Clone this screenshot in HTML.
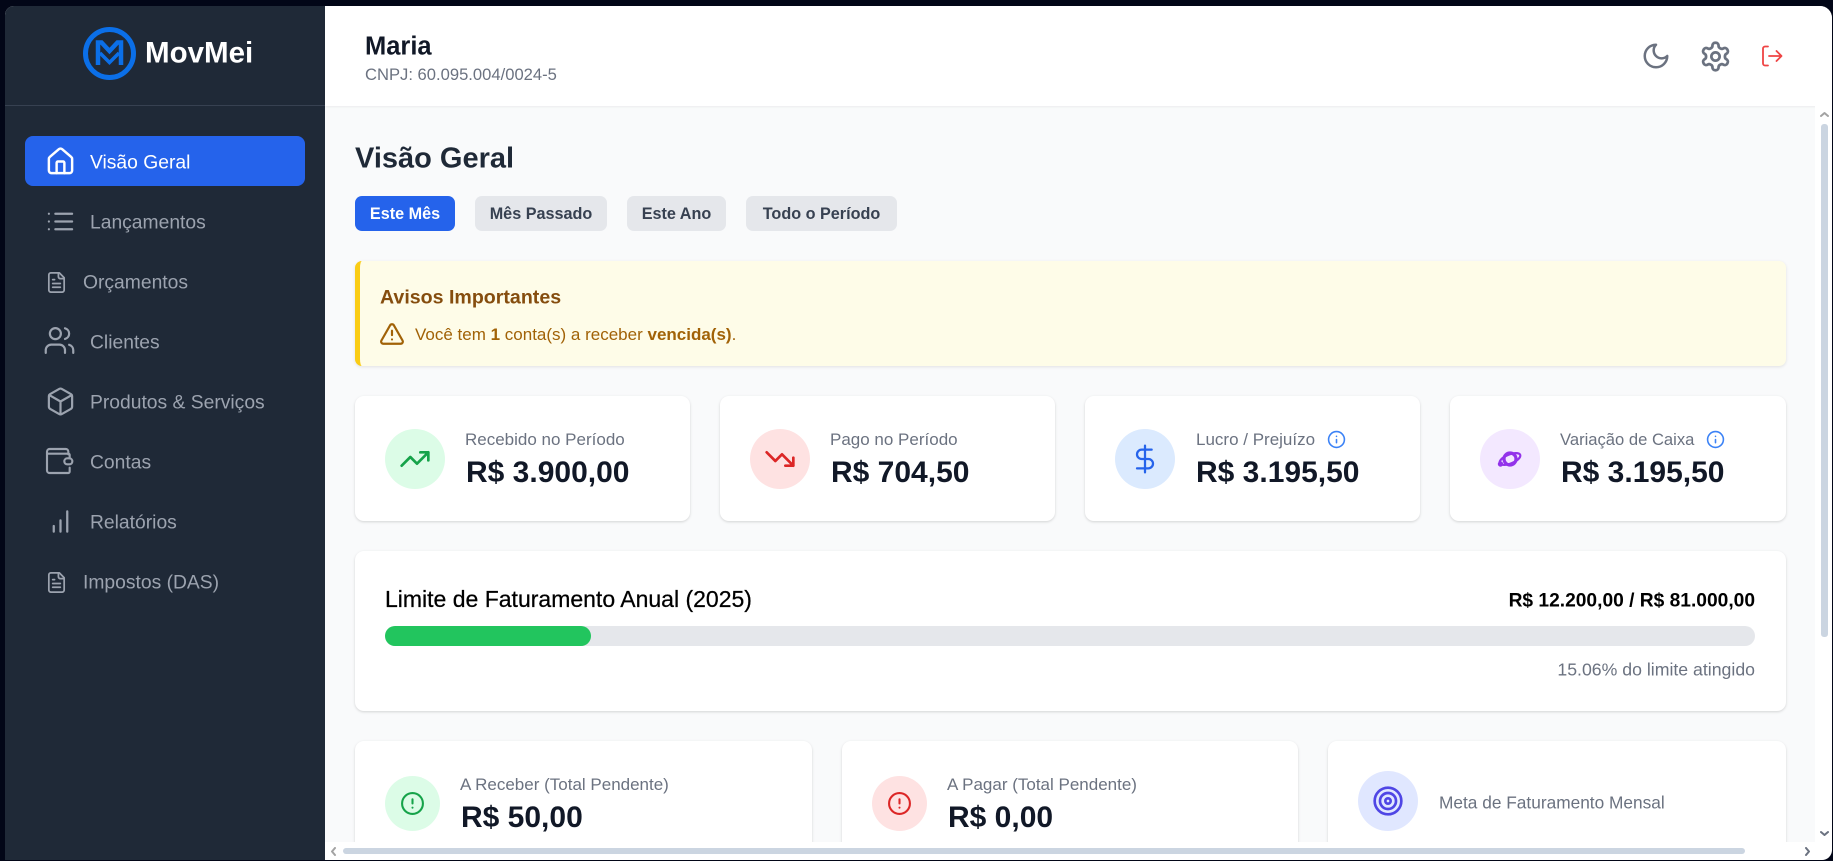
<!DOCTYPE html>
<html lang="pt-BR"><head><meta charset="utf-8"><title>MovMei</title>
<style>
*{box-sizing:border-box;margin:0;padding:0}
html,body{width:1833px;height:861px;overflow:hidden;background:#020617;font-family:"Liberation Sans",sans-serif}
.a,.t,svg.i{position:absolute}
.t{white-space:nowrap;line-height:1.2;transform:translateY(-50%)}
svg.i{fill:none;stroke:currentColor;stroke-linecap:round;stroke-linejoin:round;stroke-width:2}
.nav{color:#9ca3af;font-size:19.3px}
.card{position:absolute;background:#fff;border-radius:9px;box-shadow:0 1px 3px rgba(0,0,0,.1),0 1px 2px rgba(0,0,0,.06)}
.c{position:absolute;border-radius:50%}
.lb{color:#6b7280;font-size:17px}
.v{color:#111827;font-size:30px;font-weight:700}
.b{position:absolute;top:196px;height:35px;border-radius:7px;background:#e5e7eb;color:#374151;font-size:16.2px;font-weight:700;text-align:center;line-height:37px}
</style></head><body>
<div class="a" style="left:5px;top:6px;width:1827px;height:854px;border-radius:9px 12px 12px 0;overflow:hidden;background:#f9fafb">
<div class="a" style="left:0;top:0;width:320px;height:854px;background:#1f2937"></div>
<div class="a" style="left:0;top:99px;width:320px;height:1px;background:#374151"></div>
<div class="a" style="left:320px;top:0;width:1507px;height:100px;background:#fff;box-shadow:0 1px 2px rgba(0,0,0,.06)"></div>
</div>

<!-- logo -->
<svg class="i" style="left:83px;top:27px;color:#0b6fe8;stroke-linecap:butt;stroke-linejoin:miter" width="53" height="53" viewBox="0 0 53 53">
<circle cx="26.5" cy="26.5" r="24" stroke-width="5"/>
<path d="M15 38V15.5h3.5L26.5 24l8-8.5H38V38" stroke-width="4.5"/>
<path d="M17 26l9.5 9.5L36 26" stroke-width="3.5"/>
</svg>
<div class="t" style="left:145px;top:53px;color:#fff;font-size:29.5px;font-weight:700">MovMei</div>

<!-- nav -->
<div class="a" style="left:25px;top:136px;width:280px;height:50px;border-radius:8px;background:#2563eb"></div>
<svg class="i" style="left:44.5px;top:145.5px;color:#fff;stroke-width:1.9" width="31" height="31" viewBox="0 0 24 24"><path d="M15 21v-8a1 1 0 0 0-1-1h-4a1 1 0 0 0-1 1v8"/><path d="M3 10a2 2 0 0 1 .709-1.528l7-5.999a2 2 0 0 1 2.582 0l7 5.999A2 2 0 0 1 21 10v9a2 2 0 0 1-2 2H5a2 2 0 0 1-2-2z"/></svg>
<div class="t nav" style="left:90px;top:163px;color:#fff">Visão Geral</div>

<svg class="i" style="left:44.5px;top:205.5px;color:#9ca3af;stroke-width:1.7" width="31" height="31" viewBox="0 0 24 24"><path d="M3 12h.01M3 18h.01M3 6h.01M8 12h13M8 18h13M8 6h13"/></svg>
<div class="t nav" style="left:90px;top:223px">Lançamentos</div>

<svg class="i" style="left:45px;top:270.5px;color:#9ca3af;stroke-width:1.8" width="23" height="23" viewBox="0 0 24 24"><path d="M15 2H6a2 2 0 0 0-2 2v16a2 2 0 0 0 2 2h12a2 2 0 0 0 2-2V7Z"/><path d="M14 2v4a2 2 0 0 0 2 2h4M10 9H8M16 13H8M16 17H8"/></svg>
<div class="t nav" style="left:83px;top:283px">Orçamentos</div>

<svg class="i" style="left:43px;top:324px;color:#9ca3af;stroke-width:1.6" width="33" height="33" viewBox="0 0 24 24"><path d="M16 21v-2a4 4 0 0 0-4-4H6a4 4 0 0 0-4 4v2"/><circle cx="9" cy="7" r="4"/><path d="M22 21v-2a4 4 0 0 0-3-3.87M16 3.13a4 4 0 0 1 0 7.75"/></svg>
<div class="t nav" style="left:90px;top:343px">Clientes</div>

<svg class="i" style="left:44.5px;top:385.5px;color:#9ca3af;stroke-width:1.7" width="31" height="31" viewBox="0 0 24 24"><path d="M21 8a2 2 0 0 0-1-1.73l-7-4a2 2 0 0 0-2 0l-7 4A2 2 0 0 0 3 8v8a2 2 0 0 0 1 1.73l7 4a2 2 0 0 0 2 0l7-4A2 2 0 0 0 21 16Z"/><path d="m3.3 7 8.7 5 8.7-5M12 22V12"/></svg>
<div class="t nav" style="left:90px;top:403px">Produtos &amp; Serviços</div>

<svg class="i" style="left:43px;top:444.5px;color:#9ca3af;stroke-width:1.6" width="32" height="32" viewBox="0 0 24 24"><path d="M19 7V5a2 2 0 0 0-2-2H5a2 2 0 0 0-2 2v14a2 2 0 0 0 2 2h14a1 1 0 0 0 1-1v-3"/><path d="M3 6.5h16a1 1 0 0 1 1 1V10"/><rect x="16" y="10" width="6" height="4.5" rx="2.2"/></svg>
<div class="t nav" style="left:90px;top:463px">Contas</div>

<svg class="i" style="left:46.5px;top:507.5px;color:#9ca3af" width="27" height="27" viewBox="0 0 24 24"><path d="M12 21V11M18 21V3M6 21v-5"/></svg>
<div class="t nav" style="left:90px;top:523px">Relatórios</div>

<svg class="i" style="left:45px;top:570.5px;color:#9ca3af;stroke-width:1.8" width="23" height="23" viewBox="0 0 24 24"><path d="M15 2H6a2 2 0 0 0-2 2v16a2 2 0 0 0 2 2h12a2 2 0 0 0 2-2V7Z"/><path d="M14 2v4a2 2 0 0 0 2 2h4M10 9H8M16 13H8M16 17H8"/></svg>
<div class="t nav" style="left:83px;top:583px">Impostos (DAS)</div>

<!-- header -->
<div class="t" style="left:365px;top:47px;color:#111827;font-size:25.5px;font-weight:700">Maria</div>
<div class="t" style="left:365px;top:75px;color:#6b7280;font-size:16.6px">CNPJ: 60.095.004/0024-5</div>
<svg class="i" style="left:1641px;top:40.5px;color:#6b7280" width="30" height="30" viewBox="0 0 24 24"><path d="M12 3a6 6 0 0 0 9 9 9 9 0 1 1-9-9Z"/></svg>
<svg class="i" style="left:1699px;top:39.5px;color:#6b7280" width="33" height="33" viewBox="0 0 24 24"><path d="M12.22 2h-.44a2 2 0 0 0-2 2v.18a2 2 0 0 1-1 1.73l-.43.25a2 2 0 0 1-2 0l-.15-.08a2 2 0 0 0-2.73.73l-.22.38a2 2 0 0 0 .73 2.73l.15.1a2 2 0 0 1 1 1.72v.51a2 2 0 0 1-1 1.74l-.15.09a2 2 0 0 0-.73 2.73l.22.38a2 2 0 0 0 2.73.73l.15-.08a2 2 0 0 1 2 0l.43.25a2 2 0 0 1 1 1.73V20a2 2 0 0 0 2 2h.44a2 2 0 0 0 2-2v-.18a2 2 0 0 1 1-1.73l.43-.25a2 2 0 0 1 2 0l.15.08a2 2 0 0 0 2.73-.73l.22-.39a2 2 0 0 0-.73-2.73l-.15-.08a2 2 0 0 1-1-1.74v-.5a2 2 0 0 1 1-1.74l.15-.09a2 2 0 0 0 .73-2.73l-.22-.38a2 2 0 0 0-2.73-.73l-.15.08a2 2 0 0 1-2 0l-.43-.25a2 2 0 0 1-1-1.73V4a2 2 0 0 0-2-2z"/><circle cx="12" cy="12" r="3"/></svg>
<svg class="i" style="left:1760px;top:44px;color:#ef4444;stroke-width:1.8" width="24" height="24" viewBox="0 0 24 24"><path d="M8 21.5H5a2 2 0 0 1-2-2v-15a2 2 0 0 1 2-2h3M16.5 17l5-5-5-5M21.5 12H9"/></svg>

<!-- title + filters -->
<div class="t" style="left:355px;top:159px;color:#1f2937;font-size:29px;font-weight:700">Visão Geral</div>
<div class="b" style="left:355px;width:100px;background:#2563eb;color:#fff">Este Mês</div>
<div class="b" style="left:475px;width:132px">Mês Passado</div>
<div class="b" style="left:627px;width:99px">Este Ano</div>
<div class="b" style="left:746px;width:151px">Todo o Período</div>

<!-- alert -->
<div class="a" style="left:355px;top:261px;width:1431px;height:105px;background:#fefce8;border-left:5px solid #facc15;border-radius:7px;box-shadow:0 1px 3px rgba(0,0,0,.1)"></div>
<div class="t" style="left:380px;top:298px;color:#854d0e;font-size:19.6px;font-weight:700">Avisos Importantes</div>
<svg class="i" style="left:379px;top:321px;color:#a16207" width="26" height="26" viewBox="0 0 24 24"><path d="m21.73 18-8-14a2 2 0 0 0-3.48 0l-8 14A2 2 0 0 0 4 21h16a2 2 0 0 0 1.73-3M12 9v4M12 17h.01"/></svg>
<div class="t" style="left:415px;top:335px;color:#a16207;font-size:17px">Você tem <b>1</b> conta(s) a receber <b>vencida(s)</b>.</div>

<!-- row 1 -->
<div class="card" style="left:355px;top:396px;width:335px;height:125px"></div>
<div class="c" style="left:385px;top:429px;width:60px;height:60px;background:#dcfce7"></div>
<svg class="i" style="left:399px;top:443px;color:#16a34a" width="32" height="32" viewBox="0 0 24 24"><path d="M22 7l-8.5 8.5-5-5L2 17M16 7h6v6"/></svg>
<div class="t lb" style="left:465px;top:440px">Recebido no Período</div>
<div class="t v" style="left:466px;top:473px">R$ 3.900,00</div>

<div class="card" style="left:720px;top:396px;width:335px;height:125px"></div>
<div class="c" style="left:750px;top:429px;width:60px;height:60px;background:#fee2e2"></div>
<svg class="i" style="left:764px;top:443px;color:#dc2626" width="32" height="32" viewBox="0 0 24 24"><path d="M22 17l-8.5-8.5-5 5L2 7M16 17h6v-6"/></svg>
<div class="t lb" style="left:830px;top:440px">Pago no Período</div>
<div class="t v" style="left:831px;top:473px">R$ 704,50</div>

<div class="card" style="left:1085px;top:396px;width:335px;height:125px"></div>
<div class="c" style="left:1115px;top:429px;width:60px;height:60px;background:#dbeafe"></div>
<svg class="i" style="left:1129px;top:443px;color:#2563eb;stroke-width:1.7" width="32" height="32" viewBox="0 0 24 24"><path d="M12 2v20M17 5H9.5a3.5 3.5 0 0 0 0 7h5a3.5 3.5 0 0 1 0 7H6"/></svg>
<div class="t lb" style="left:1196px;top:440px">Lucro / Prejuízo</div>
<svg class="i" style="left:1327px;top:430px;color:#3b82f6" width="19" height="19" viewBox="0 0 24 24"><circle cx="12" cy="12" r="10"/><path d="M12 16v-4M12 8h.01"/></svg>
<div class="t v" style="left:1196px;top:473px">R$ 3.195,50</div>

<div class="card" style="left:1450px;top:396px;width:336px;height:125px"></div>
<div class="c" style="left:1480px;top:429px;width:60px;height:60px;background:#f3e8ff"></div>
<svg class="i" style="left:1495px;top:444px;color:#9333ea" width="30" height="30" viewBox="0 0 30 30"><circle cx="15" cy="15" r="6" stroke-width="3.2"/><ellipse cx="15" cy="15" rx="11" ry="4.5" transform="rotate(-22 15 15)" stroke-width="2.2"/><circle cx="5.5" cy="20" r="1.6" stroke-width="2.2"/></svg>
<div class="t lb" style="left:1560px;top:440px;font-size:16.6px">Variação de Caixa</div>
<svg class="i" style="left:1706px;top:430px;color:#3b82f6" width="19" height="19" viewBox="0 0 24 24"><circle cx="12" cy="12" r="10"/><path d="M12 16v-4M12 8h.01"/></svg>
<div class="t v" style="left:1561px;top:473px">R$ 3.195,50</div>

<!-- limit -->
<div class="card" style="left:355px;top:551px;width:1431px;height:160px"></div>
<div class="t" style="left:385px;top:600px;color:#000;font-size:23px;-webkit-text-stroke:.25px #000">Limite de Faturamento Anual (2025)</div>
<div class="t" style="right:78px;top:601px;color:#000;font-size:19.2px;font-weight:700">R$ 12.200,00 / R$ 81.000,00</div>
<div class="a" style="left:385px;top:626px;width:1370px;height:20px;border-radius:10px;background:#e5e7eb"></div>
<div class="a" style="left:385px;top:626px;width:206px;height:20px;border-radius:10px;background:#22c55e"></div>
<div class="t" style="right:78px;top:670px;color:#6b7280;font-size:17.7px">15.06% do limite atingido</div>

<!-- row 3 -->
<div class="a" style="left:325px;top:720px;width:1490px;height:122px;overflow:hidden">
<div class="card" style="left:30px;top:21px;width:457px;height:130px"></div>
<div class="card" style="left:517px;top:21px;width:456px;height:130px"></div>
<div class="card" style="left:1003px;top:21px;width:458px;height:130px"></div>
</div>
<div class="c" style="left:385px;top:776px;width:55px;height:55px;background:#dcfce7"></div>
<svg class="i" style="left:400px;top:791px;color:#16a34a" width="25" height="25" viewBox="0 0 24 24"><circle cx="12" cy="12" r="10"/><path d="M12 8v4M12 16h.01"/></svg>
<div class="t lb" style="left:460px;top:785px">A Receber (Total Pendente)</div>
<div class="t v" style="left:461px;top:818px">R$ 50,00</div>
<div class="c" style="left:872px;top:776px;width:55px;height:55px;background:#fee2e2"></div>
<svg class="i" style="left:887px;top:791px;color:#dc2626" width="25" height="25" viewBox="0 0 24 24"><circle cx="12" cy="12" r="10"/><path d="M12 8v4M12 16h.01"/></svg>
<div class="t lb" style="left:947px;top:785px">A Pagar (Total Pendente)</div>
<div class="t v" style="left:948px;top:818px">R$ 0,00</div>
<div class="c" style="left:1358px;top:771px;width:60px;height:60px;background:#e0e7ff"></div>
<svg class="i" style="left:1372px;top:785px;color:#4f46e5" width="32" height="32" viewBox="0 0 24 24"><circle cx="12" cy="12" r="10"/><circle cx="12" cy="12" r="6"/><circle cx="12" cy="12" r="2"/></svg>
<div class="t lb" style="left:1439px;top:803px;font-size:17.3px">Meta de Faturamento Mensal</div>

<!-- scrollbars -->
<div class="a" style="left:325px;top:842px;width:1490px;height:18px;background:#fff"></div>
<div class="a" style="left:1815px;top:106px;width:17px;height:754px;background:#fff;border-radius:0 0 10px 0"></div>
<div class="a" style="left:343px;top:848px;width:1402px;height:6px;border-radius:3px;background:#cbd5e1"></div>
<div class="a" style="left:1821px;top:124px;width:7px;height:513px;border-radius:3px;background:#cbd5e1"></div>
<svg class="i" style="left:1820px;top:111px;color:#a3a3a3;stroke-width:2" width="9" height="7" viewBox="0 0 9 7"><path d="M1 5l3.5-3L8 5"/></svg>
<svg class="i" style="left:1820px;top:830px;color:#6b7280;stroke-width:2" width="9" height="7" viewBox="0 0 9 7"><path d="M1 2l3.5 3L8 2"/></svg>
<svg class="i" style="left:330px;top:847px;color:#a3a3a3;stroke-width:2" width="7" height="9" viewBox="0 0 7 9"><path d="M5 1L2 4.5 5 8"/></svg>
<svg class="i" style="left:1804px;top:847px;color:#6b7280;stroke-width:2" width="7" height="9" viewBox="0 0 7 9"><path d="M2 1l3 3.5L2 8"/></svg>
</body></html>
